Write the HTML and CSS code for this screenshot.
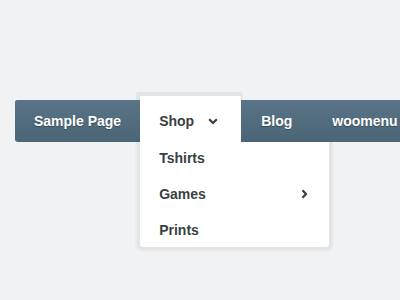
FILE: index.html
```html
<!DOCTYPE html>
<html lang="en">
<head>
    <meta charset="UTF-8">
    <meta name="viewport" content="width=device-width, initial-scale=1.0">
    <title>Menu</title>
    <link rel="stylesheet" href="styles.css">
</head>
<body>
    <div class="page">
        <ul class="nav">
            <li class="item">Sample Page</li>
            <li class="item shop">
                Shop
                <svg class="down" width="10" height="7" viewBox="0 0 10 7"><path d="M1.2 1.2 L5 5 L8.8 1.2" fill="none" stroke="#3a3f44" stroke-width="2.2"/></svg>
                <ul class="sub">
                    <li>Tshirts</li>
                    <li>Games
                        <svg class="right" width="7" height="10" viewBox="0 0 7 10"><path d="M1.5 1.3 L5 5 L1.5 8.7" fill="none" stroke="#3a3f44" stroke-width="2.2"/></svg>
                    </li>
                    <li>Prints</li>
                </ul>
            </li>
            <li class="item">Blog</li>
            <li class="item">woomenu</li>
        </ul>
    </div>
</body>
</html>
```

FILE: styles.css
```css
* {
    padding: 0;
    margin: 0;
}
li {
    list-style: none;
}
body {
    background: #f1f2f4;
    font-family: "Liberation Sans", Arial, sans-serif;
    font-weight: bold;
    font-size: 14px;
}
.page {
    width: 400px;
    height: 300px;
    overflow: hidden;
    padding-top: 100px;
    box-sizing: border-box;
}
.nav {
    display: flex;
    align-items: flex-end;
    margin-left: 15px;
    width: 420px;
    height: 42px;
    background: linear-gradient(#5a7487, #4b6577);
    border-radius: 2px 0 0 3px;
}
.item {
    height: 42px;
    line-height: 42px;
    padding: 0 19px;
    color: #fff;
    text-shadow: 0 1px 1px rgba(0, 0, 0, 0.35);
    white-space: nowrap;
}
.item:nth-child(3),
.item:nth-child(4) {
    padding: 0 20px;
}
.shop {
    position: relative;
    height: 46px;
    line-height: 50px;
    width: 63px;
    background: #fff;
    color: #3a3f44;
    text-shadow: none;
}
/* grey rim above the bar */
.shop::before {
    content: "";
    position: absolute;
    top: -4px;
    left: -4px;
    right: -2px;
    height: 9px;
    background: #e3e5e7;
    border-radius: 3px 3px 0 0;
    z-index: -1;
}
.down {
    position: absolute;
    left: 68px;
    top: 22px;
}
.sub {
    position: absolute;
    top: 45px;
    left: 0;
    width: 189px;
    padding-bottom: 0;
    background: #fff;
    border-radius: 0 3px 3px 3px;
    box-shadow: 0 0 0 3px #e2e4e6, 0 0 0 5px #eaecee;
    z-index: -1;
}
.sub li {
    position: relative;
    height: 36px;
    line-height: 34px;
    padding-left: 19px;
    color: #3a3f44;
}
.sub li:last-child {
    height: 34px;
}
.right {
    position: absolute;
    left: 161px;
    top: 12px;
}
```
